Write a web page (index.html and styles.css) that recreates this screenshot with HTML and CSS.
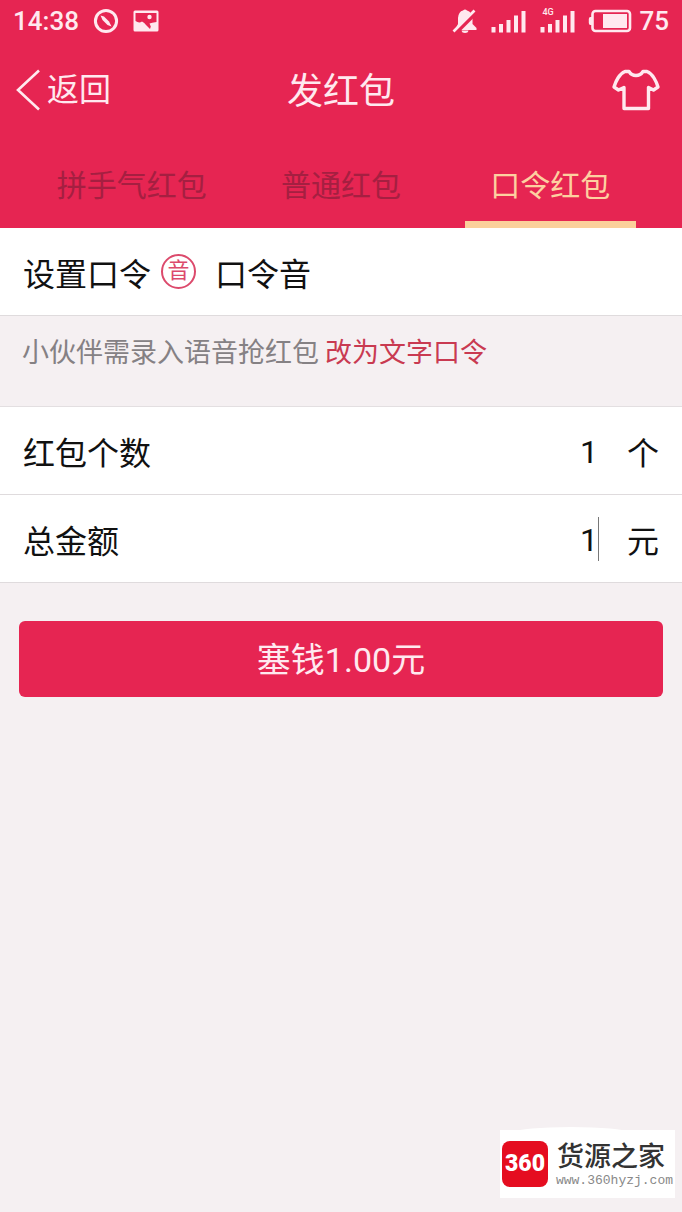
FILE: index.html
```html
<!DOCTYPE html>
<html lang="zh-CN">
<head>
<meta charset="utf-8">
<meta name="viewport" content="width=device-width, initial-scale=1">
<title>发红包</title>
<link rel="stylesheet" href="styles.css">
</head>
<body>
<header class="header">
  <div class="status">
    <span class="status-text">14:38</span>
    <svg class="icon-block" width="26" height="26" viewBox="0 0 26 26" fill="none" stroke="currentColor">
      <circle cx="13" cy="13" r="10.6" stroke-width="3"/>
      <path fill="currentColor" stroke="none" d="M7.500 7.500 11 8.500 16 13.500 18.500 18.500 14.500 17 9.500 12Z"/>
    </svg>
    <svg width="26" height="22" viewBox="0 0 26 22">
      <path fill="currentColor" fill-rule="evenodd" d="M2 .5H24Q25.500.5 25.500 2V20Q25.500 21.500 24 21.500H2Q.5 21.500.5 20V2Q.5.5 2 .5ZM2.500 3V11Q6 13.500 9 11.500 11.500 12.500 13 15L17 19 17.800 16.500 16.500 13.500Q18.500 12.500 23.500 12V3Z"/>
      <circle cx="16.500" cy="7" r="2.200" fill="currentColor"/>
    </svg>
    <span class="spacer"></span>
    <svg width="26" height="26" viewBox="0 0 26 26">
      <path fill="currentColor" d="M4 20 6 16V10Q6.500 3.500 11 2.500 13 .5 15 2.500 20 4 20.500 10V16L24.500 20V22H4ZM9.500 22.500H16.500Q16 25 13 25T9.500 22.500Z"/>
      <path d="M3 25 24 4" stroke="#e62552" stroke-width="5"/>
      <path d="M1.500 23.500 22.500 2.500" stroke="currentColor" stroke-width="2.600"/>
    </svg>
    <svg class="signal" width="36" height="24" viewBox="0 0 36 24" fill="currentColor">
      <path d="M.5 18h4v5.500h-4zM8 15h4v8.500H8zM15.500 11h4v12.500h-4zM23 6.500h4v17h-4zM30.500 2h4v21.500h-4z"/>
    </svg>
    <span class="signal-4g">
      <svg width="36" height="24" viewBox="0 0 36 24" fill="currentColor">
        <path d="M.5 18h4v5.500h-4zM8 15h4v8.500H8zM15.500 11h4v12.500h-4zM23 6.500h4v17h-4zM30.500 2h4v21.500h-4z"/>
      </svg>
      <span class="net-type">4G</span>
    </span>
    <svg class="battery" width="44" height="24" viewBox="0 0 44 24">
      <rect x="4.500" y="2" width="37.500" height="20" rx="3" fill="none" stroke="currentColor" stroke-width="2.600"/>
      <path fill="currentColor" d="M4 8v8H2.500Q.8 16 .8 14V10Q.8 8 2.500 8ZM15 5H39V19H15Z"/>
    </svg>
    <span class="status-text">75</span>
  </div>

  <nav class="navbar">
    <button class="back" type="button">
      <svg width="25" height="42" viewBox="0 0 25 42" fill="none" stroke="currentColor" stroke-width="2.600"><path d="M23 1.500 2 21 23 40.500"/></svg>
      <span>返回</span>
    </button>
    <h1 class="title">发红包</h1>
    <button class="skin" type="button" aria-label="皮肤">
      <svg width="48" height="42" viewBox="0 0 48 42" fill="none" stroke="currentColor" stroke-width="3.400" stroke-linejoin="round" stroke-linecap="round">
        <path d="M17 2.500Q19.500 6.500 24 6.500T31 2.500H35Q39 4 42 9 44.500 13 46 18L41.500 21 36.500 18.500V39.500H12V18.500L6.500 21 2 18Q3.500 13 6 9 9 4 13 2.500Z"/>
      </svg>
    </button>
  </nav>

  <div class="tabs" role="tablist">
    <button class="tab" type="button" role="tab" aria-selected="false">拼手气红包</button>
    <button class="tab" type="button" role="tab" aria-selected="false">普通红包</button>
    <button class="tab tab-active" type="button" role="tab" aria-selected="true">口令红包</button>
  </div>
</header>

<main>
  <div class="row">
    <label for="password">设置口令</label>
    <span class="voice-badge">音</span>
    <input class="field" id="password" type="text" value="口令音">
  </div>
  <p class="hint"><span>小伙伴需录入语音抢红包</span><a class="hint-link" href="#">改为文字口令</a></p>
  <div class="row">
    <label for="count">红包个数</label>
    <input class="field field-number" id="count" type="text" inputmode="numeric" value="1">
    <span class="unit">个</span>
  </div>
  <div class="row">
    <label for="amount">总金额</label>
    <input class="field field-number field-focused" id="amount" type="text" inputmode="decimal" value="1">
    <span class="unit">元</span>
  </div>
  <button class="submit" type="button">塞钱1.00元</button>
</main>

<aside class="watermark">
  <span class="wm-logo">360</span>
  <span class="wm-text">
    <span class="wm-name">货源之家</span>
    <span class="wm-url">www.360hyzj.com</span>
  </span>
</aside>
</body>
</html>
```
FILE: styles.css
```css
* { box-sizing: border-box; }

body {
  margin: 0;
  min-height: 100vh;
  position: relative;
  background: #f5f0f2;
  color: #111;
  font-family: Roboto, "Noto Sans CJK SC", sans-serif;
  font-size: 32px;
}

button, input {
  font: inherit;
  color: inherit;
  background: none;
  border: 0;
  padding: 0;
  margin: 0;
}

svg { display: block; flex: none; }

.header {
  background: #e62552;
  color: #ffe9ef;
}

.status {
  display: flex;
  align-items: center;
  height: 42px;
  padding: 0 13px;
}
.status-text {
  font-size: 26px;
  font-weight: 500;
  line-height: 42px;
}
.icon-block { margin: 0 14px; }
.spacer { flex: 1; }
.signal { margin: 0 13px; }
.signal-4g { position: relative; }
.net-type {
  position: absolute;
  left: 2px;
  top: -3px;
  font-size: 9px;
  line-height: 12px;
  font-weight: 500;
}
.battery { margin: 0 7px 0 12px; }

.navbar {
  display: grid;
  grid-template-columns: 1fr auto 1fr;
  align-items: center;
  height: 96px;
  padding: 0 22px;
}
.back {
  display: flex;
  align-items: center;
  gap: 6px;
  justify-self: start;
  margin-left: -6px;
  line-height: 42px;
}
.title {
  margin: 0;
  padding-bottom: 4px;
  font-size: 36px;
  font-weight: 400;
}
.skin { justify-self: end; }

.tabs {
  display: grid;
  grid-template-columns: repeat(3, 1fr);
  height: 90px;
  padding: 0 27px;
}
.tab {
  margin: 0 19px;
  border-top: 7px solid transparent;
  border-bottom: 7px solid transparent;
  font-size: 30px;
  white-space: nowrap;
  color: #a51f41;
}
.tab-active {
  color: #fdd0a0;
  border-bottom-color: #fbd09b;
}

.row {
  display: flex;
  align-items: center;
  height: 88px;
  padding: 0 23px;
  background: #fff;
  border-bottom: 1px solid #dfdbdd;
}
.voice-badge {
  width: 35px;
  height: 35px;
  margin: 0 19px 0 10px;
  border: 2px solid #dc4a6c;
  border-radius: 50%;
  color: #dc4a6c;
  font-size: 22px;
  line-height: 30px;
  text-align: center;
}
.field {
  flex: 1;
  min-width: 0;
  height: 44px;
  outline: 0;
}
.field-number {
  padding-top: 3px;
  text-align: right;
  margin-right: 28px;
  border-right: 1px solid transparent;
}
.field-focused { border-right-color: #777; }

.hint {
  display: flex;
  gap: 6px;
  margin: 0;
  padding: 17px 22px 33px;
  font-size: 27px;
  line-height: 40px;
  color: #858184;
  border-bottom: 1px solid #e3dfe1;
}
.hint-link {
  color: #c93a51;
  text-decoration: none;
}

.submit {
  display: block;
  width: calc(100% - 38px);
  height: 76px;
  margin: 38px 19px;
  padding-bottom: 4px;
  border-radius: 6px;
  background: #e62552;
  color: #ffe9ef;
  font-size: 34px;
}

.watermark {
  position: absolute;
  right: 7px;
  bottom: 14px;
  display: flex;
  align-items: center;
  gap: 8px;
  height: 68px;
  padding: 0 2px;
  background: #fff;
}
.watermark::before {
  content: "";
  position: absolute;
  left: 16px;
  top: -3px;
  width: 110px;
  height: 10px;
  border-radius: 50%;
  background: #fff;
}
.wm-logo {
  position: relative;
  width: 46px;
  height: 46px;
  border-radius: 8px;
  background: #e50d20;
  color: #fff;
  font-size: 23px;
  font-weight: 900;
  line-height: 46px;
  text-align: center;
}
.wm-text {
  position: relative;
  display: flex;
  flex-direction: column;
}
.wm-name {
  padding-left: 1px;
  font-size: 27px;
  font-weight: 500;
  line-height: 34px;
  color: #333;
}
.wm-url {
  font-family: "Liberation Mono", monospace;
  font-size: 13px;
  line-height: 14px;
  color: #888;
}
```
